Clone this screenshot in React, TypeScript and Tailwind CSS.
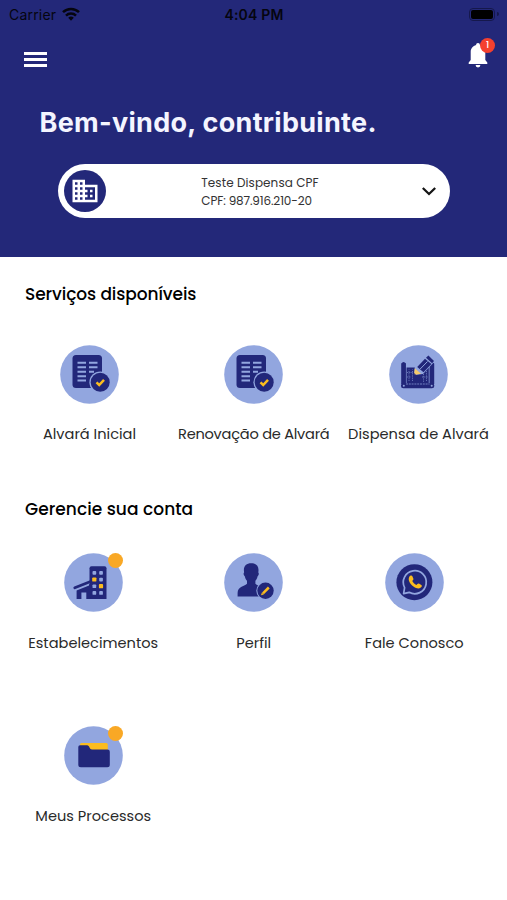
import React from 'react';
import clsx from 'clsx';

type ServiceProps = {
  label: string;
  icon: React.ReactNode;
  labelClass?: string;
  hasAlert?: boolean;
};

const NAVY = '#22277a';
const SKY = '#92a6df';
const AMBER = '#fbbc1f';

function WifiIcon() {
  return (
    <svg width="18" height="14" viewBox="0 0 18 14" fill="none" stroke="#05050f" strokeWidth="2.5">
      <path d="M1 5.2a11.5 11.5 0 0 1 16 0" />
      <path d="M4 8.6a7.2 7.2 0 0 1 10 0" />
      <path d="M6.2 10.8a4 4 0 0 1 5.6 0L9 13.8z" fill="#05050f" stroke="none" />
    </svg>
  );
}

function BellIcon() {
  return (
    <svg width="20" height="25" viewBox="0 0 20 25" fill="#fff">
      <path d="M10 0c1.2 0 1.9.8 1.9 2 3.200.9 5.400 3.500 5.400 6.800v8.200l2 2.400v1.500H.7v-1.500l2-2.400V8.800c0-3.300 2.200-5.900 5.400-6.800C8.100.8 8.800 0 10 0z" />
      <path d="M7.600 22h4.800a2.400 2.400 0 0 1-4.800 0z" />
    </svg>
  );
}

function CompanyIcon() {
  return (
    <svg width="30" height="30" viewBox="0 0 24 24" fill="#fff">
      <path d="M12 7V3H2v18h20V7H12zM6 19H4v-2h2v2zm0-4H4v-2h2v2zm0-4H4V9h2v2zm0-4H4V5h2v2zm4 12H8v-2h2v2zm0-4H8v-2h2v2zm0-4H8V9h2v2zm0-4H8V5h2v2zm10 12h-8v-2h2v-2h-2v-2h2v-2h-2V9h8v10zm-2-8h-2v2h2v-2zm0 4h-2v2h2v-2z" />
    </svg>
  );
}

function DocumentIcon() {
  return (
    <g>
      <rect x="12.500" y="10" width="29.500" height="33" rx="3.500" fill={NAVY} />
      <path
        d="M17.500 17.800H26M29 17.800h8.500M17.500 22.300H26M29 22.300h8.500M17.500 26.800H26M29 26.800h5M17.500 31.200H26M17.500 35.500H26"
        stroke={SKY}
        strokeWidth="1.900"
      />
      <circle cx="40.200" cy="37.200" r="10.800" fill={SKY} />
      <circle cx="40.200" cy="37.200" r="9.500" fill={NAVY} />
      <path d="m36.500 37.400 2.700 2.600 4.800-5.200" fill="none" stroke={AMBER} strokeWidth="2.500" />
    </g>
  );
}

function BlueprintIcon() {
  return (
    <g>
      <path d="M17 22.500h23.500V40H17z" fill={NAVY} />
      <path d="M12.200 18.500q2.300-3 4.800 0v20.500h-4.800zM40.500 18.500q2.300-3 4.700 0v20.500h-4.700z" fill={NAVY} />
      <path d="M17.400 19v19.500M40.100 19v19.500" stroke={SKY} strokeWidth=".6" />
      <rect x="12" y="38" width="33.300" height="5.300" rx="2.400" fill={NAVY} />
      <path d="M17 39h23.500" stroke={SKY} strokeWidth=".7" strokeDasharray="2 .8" />
      <circle cx="14.800" cy="40.700" r="1" fill={SKY} />
      <circle cx="42.700" cy="40.700" r="1" fill={SKY} />
      <path
        d="M20 36V24.500M23.500 36V24.500M34.500 29v8M37.500 26v10M18 27.500h6M18 32h4M33 32h6"
        fill="none"
        stroke={SKY}
        strokeWidth=".6"
        strokeDasharray="1.200 1"
      />
      <path d="m25 30 1-9L37.500 9.500l8.500 6.500-12 13z" fill={SKY} />
      <path d="m28.200 22 7.800-8.200 6.400 5.200-7.900 8.300z" fill={NAVY} />
      <path d="m37 12.800 2.400-2.200 5.600 5.400-1.900 2.200z" fill={NAVY} />
      <path d="m31.200 24 7.300-7.500" stroke={SKY} strokeWidth="1" />
      <path d="m25.800 23.200-.8 6.800 7-1.200z" fill="#f5c96a" />
      <path d="m25.300 28-.3 2 2-.3z" fill={NAVY} />
    </g>
  );
}

function BuildingIcon() {
  return (
    <g>
      <path d="M25.500 15.200a2 2 0 0 1 2-2h13a2 2 0 0 1 2 2V46h-17z" fill={NAVY} />
      <path d="M12.600 46v-8.400l13.700-5.700V46h-4v-6.500h-4.900V46z" fill={NAVY} />
      <path d="m10.800 34.700 15.200-6" stroke={NAVY} strokeWidth="2.800" strokeLinecap="round" />
      <path d="M26 31.200v13" stroke={NAVY} strokeWidth="2" />
      <g fill={SKY}>
        <rect x="28.500" y="18" width="3.700" height="3.700" rx=".9" />
        <rect x="35.200" y="18" width="3.700" height="3.700" rx=".9" />
        <rect x="35.200" y="24.700" width="3.700" height="3.700" rx=".9" />
        <rect x="28.500" y="31.400" width="3.700" height="3.700" rx=".9" />
        <rect x="28.500" y="38.100" width="3.700" height="3.700" rx=".9" />
        <rect x="35.200" y="38.100" width="3.700" height="3.700" rx=".9" />
      </g>
      <rect x="28.200" y="24.400" width="4.200" height="4.200" rx=".9" fill={AMBER} />
      <rect x="34.900" y="31.100" width="4.200" height="4.200" rx=".9" fill={AMBER} />
    </g>
  );
}

function ProfileIcon() {
  return (
    <g>
      <path
        d="M27.200 10.200c4.800 0 7.600 3 7.300 7.400l-.2 2c.8.300.7 2.500-.8 3.800-.4 2-1.200 3.300-2.100 4.400v3c1.700 2.300 8.900 2.500 8.900 8.200v4.500H13.600v-3.500c0-6.700 7.500-6.900 9.400-9.200v-3c-1-1.100-1.700-2.400-2.100-4.400-1.500-1.300-1.600-3.500-.8-3.800l-.2-2c-.3-4.400 2.500-7.400 7.300-7.400z"
        fill={NAVY}
      />
      <circle cx="41.500" cy="37.800" r="9.200" fill={SKY} />
      <circle cx="41.500" cy="37.800" r="8.200" fill={NAVY} />
      <path d="m39 40.400 5.800-5.900" stroke={AMBER} strokeWidth="2.500" />
      <path d="m37 42.300.9-2.900 2 2z" fill={AMBER} />
    </g>
  );
}

function WhatsappIcon() {
  return (
    <g>
      <circle cx="29.400" cy="29.200" r="18" fill={NAVY} />
      <path
        d="M18.600 40.600l1-6a11.500 11.500 0 1 1 4.600 4.700z"
        fill="none"
        stroke={SKY}
        strokeWidth="1.700"
        strokeLinejoin="round"
      />
      <path
        d="M25.200 22.800c1-.7 1.900-.3 2.300.7l.9 2.200c.3.800-.8 1.800-1.100 2.300.9 1.900 2.200 3.100 4.200 4 .6-.4 1.500-1.800 2.400-1.400l2.400 1.300c1 .5.500 2-.5 2.700-2 1.500-4.600.800-7-.8-2.300-1.600-4.300-3.800-4.900-6.200-.5-2.100.1-3.900 1.300-4.800z"
        fill={AMBER}
      />
    </g>
  );
}

function FolderIcon() {
  return (
    <g>
      <path d="M16 21v-2.500a1.500 1.500 0 0 1 1.500-1.500h24.800a1.500 1.500 0 0 1 1.500 1.500V25H16z" fill={AMBER} />
      <path d="M16 19.200h7.200c2.300 0 2.300 4.300 4.800 4.300h15.500a2.300 2.300 0 0 1 2.300 2.300v12.900a2.500 2.500 0 0 1-2.500 2.500H16.800a2.500 2.500 0 0 1-2.500-2.500V21a1.800 1.800 0 0 1 1.700-1.800z" fill={NAVY} />
    </g>
  );
}

function Service({ label, icon, labelClass = 'mt-[19px]', hasAlert }: ServiceProps) {
  return (
    <button className="flex flex-col items-center">
      <span className="relative block size-[59px]">
        <svg width="59" height="59" viewBox="0 0 59 59">
          <circle cx="29.500" cy="29.500" r="29.300" fill={SKY} />
          {icon}
        </svg>
        {hasAlert && <span className="absolute right-0 top-0 size-[15px] rounded-full bg-[#f9a825]" />}
      </span>
      <span className={clsx('whitespace-nowrap text-[14.6px] leading-6 text-[#2a2a2a]', labelClass)}>{label}</span>
    </button>
  );
}

export default function App() {
  return (
    <div className="h-[900px] w-[507px] overflow-hidden bg-white font-['Poppins','Inter',sans-serif]">
      <header className="flex h-[257px] flex-col bg-[#232879]">
        <div className="grid h-7 grid-cols-3 items-center pl-[9px] pr-2 font-['Inter',sans-serif] text-[14px] text-[#05050f]">
          <div className="flex items-center gap-1.5">
            <span className="tracking-[0.2px]">Carrier</span>
            <WifiIcon />
          </div>
          <span className="text-center font-semibold tracking-[0.2px]">4:04 PM</span>
          <div className="flex items-center justify-end gap-0.5">
            <span className="h-[13px] w-[26px] rounded-[4px] border border-[#15184c] p-px">
              <span className="block h-full rounded-[2px] bg-black" />
            </span>
            <span className="h-1 w-0.5 rounded-r bg-[#15184c]" />
          </div>
        </div>

        <div className="flex h-[62px] items-start justify-between pl-6 pr-[19px]">
          <button className="mt-6 flex flex-col gap-[3px]">
            <span className="h-[3px] w-[23px] bg-white" />
            <span className="h-[3px] w-[23px] bg-white" />
            <span className="h-[3px] w-[23px] bg-white" />
          </button>
          <button className="relative mt-[15px]">
            <BellIcon />
            <span className="absolute -right-[7px] -top-[5px] flex size-[15px] items-center justify-center rounded-full bg-[#f4402f] text-[9px] font-medium leading-none text-white">
              1
            </span>
          </button>
        </div>

        <h1 className="mt-[17px] whitespace-nowrap pl-[39.5px] font-['Inter',sans-serif] text-[27px] font-bold leading-8 tracking-[0.3px] text-[#f4f5ff]">
          Bem-vindo, contribuinte.
        </h1>

        <button className="ml-[58px] mt-[25px] flex h-[54px] w-[392px] items-center justify-between rounded-[27px] bg-white pl-1.5 pr-3 text-left">
          <span className="flex size-[42px] items-center justify-center rounded-full bg-[#232879]">
            <CompanyIcon />
          </span>
          <span className="mr-1.5 flex flex-col pt-px text-[12px] leading-[18px] text-[#333]">
            <span className="tracking-[0.08px]">Teste Dispensa CPF</span>
            <span className="tracking-[-0.13px]">CPF: 987.916.210-20</span>
          </span>
          <svg width="18" height="18" viewBox="0 0 18 18" fill="none" stroke="#151515" strokeWidth="2.300">
            <path d="m2.800 6 6.200 6 6.200-6" />
          </svg>
        </button>
      </header>

      <section className="pt-6">
        <h2 className="pl-[25px] text-[17px] font-medium leading-[26px] tracking-[-0.08px] text-black">Serviços disponíveis</h2>
        <div className="mt-[38px] grid grid-cols-[164px_164.500px_165px] pl-[7.500px]">
          <Service label="Alvará Inicial" icon={<DocumentIcon />} labelClass="mt-[18px]" />
          <Service label="Renovação de Alvará" icon={<DocumentIcon />} labelClass="mt-[18px] tracking-[-0.25px]" />
          <Service label="Dispensa de Alvará" icon={<BlueprintIcon />} labelClass="mt-[18px]" />
        </div>
      </section>

      <section className="pt-[50px]">
        <h2 className="pl-[25px] text-[17px] font-medium leading-[26px] tracking-[0.05px] text-black">Gerencie sua conta</h2>
        <div className="mt-[31px] grid grid-cols-[160.500px_160.500px_160.500px] gap-y-[71px] pl-[13px]">
          <Service label="Estabelecimentos" icon={<BuildingIcon />} hasAlert />
          <Service label="Perfil" icon={<ProfileIcon />} />
          <Service label="Fale Conosco" icon={<WhatsappIcon />} />
          <Service label="Meus Processos" icon={<FolderIcon />} hasAlert />
        </div>
      </section>
    </div>
  );
}
